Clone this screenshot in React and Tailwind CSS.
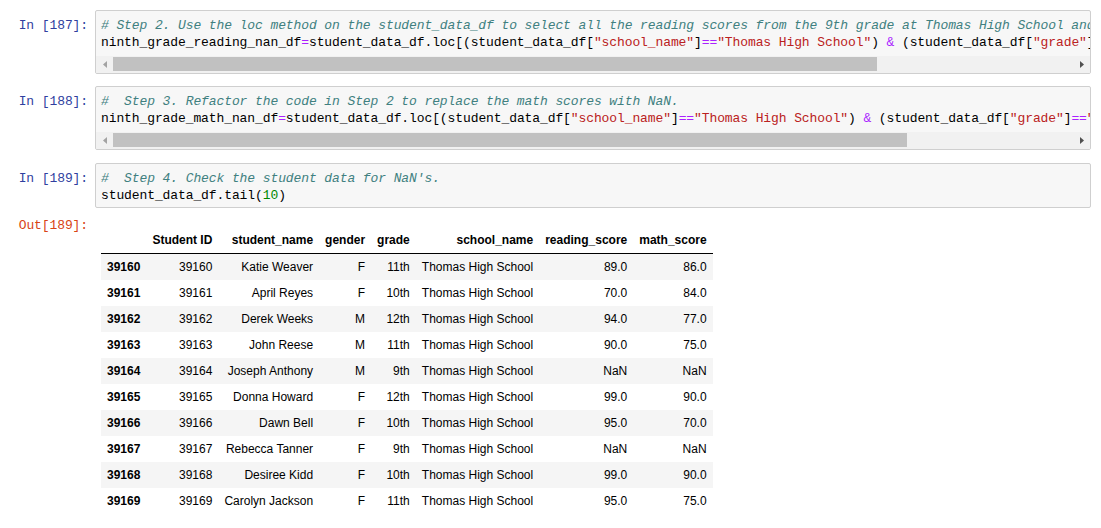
import React from "react";

const mono = { fontFamily: '"Liberation Mono", "DejaVu Sans Mono", monospace' };

const C = ({ children }) => <span className="italic text-[#408080]">{children}</span>;
const O = ({ children }) => <span className="text-[#AA22FF]">{children}</span>;
const S = ({ children }) => <span className="text-[#BA2121]">{children}</span>;
const N = ({ children }) => <span className="text-[#008800]">{children}</span>;

function Prompt({ children, out }) {
  return (
    <div
      style={mono}
      className={`w-[95px] shrink-0 pr-[7px] text-right text-[13px] tracking-[-0.1px] leading-[17px] ${
        out ? "text-[#D84315]" : "text-[#303F9F]"
      }`}
    >
      {children}
    </div>
  );
}

function Scrollbar({ thumbEnd }) {
  return (
    <div className="flex h-[17px] bg-[#f1f1f1]">
      <div className="flex w-[17px] shrink-0 items-center justify-center">
        <svg width="4" height="7" viewBox="0 0 4 7">
          <path d="M4 0 L0 3.5 L4 7 Z" fill="#a3a3a3" />
        </svg>
      </div>
      <div className="relative flex-1">
        <div
          className="absolute left-0 top-[1px] h-[14px] bg-[#c1c1c1]"
          style={{ width: thumbEnd }}
        />
      </div>
      <div className="flex w-[17px] shrink-0 items-center justify-center">
        <svg width="4" height="7" viewBox="0 0 4 7">
          <path d="M0 0 L4 3.5 L0 7 Z" fill="#505050" />
        </svg>
      </div>
    </div>
  );
}

function CodeCell({ n, lines, thumbEnd, className = "" }) {
  return (
    <div className={`flex ${className}`}>
      <Prompt>
        <div className="pt-[7px]">In [{n}]:</div>
      </Prompt>
      <div className="mr-[10px] min-w-0 flex-1 overflow-hidden rounded-[2px] border border-[#cfcfcf] bg-[#f7f7f7]">
        <div
          style={mono}
          className={`pl-[5px] pt-[6px] text-[13px] tracking-[-0.1px] leading-[17px] text-black ${
            thumbEnd ? "pb-[5px]" : "pb-[3px]"
          }`}
        >
          {lines.map((l, i) => (
            <div key={i} className="whitespace-pre">
              {l}
            </div>
          ))}
        </div>
        {thumbEnd ? <Scrollbar thumbEnd={thumbEnd} /> : null}
      </div>
    </div>
  );
}

const rows = [
  ["39160", "39160", "Katie Weaver", "F", "11th", "89.0", "86.0"],
  ["39161", "39161", "April Reyes", "F", "10th", "70.0", "84.0"],
  ["39162", "39162", "Derek Weeks", "M", "12th", "94.0", "77.0"],
  ["39163", "39163", "John Reese", "M", "11th", "90.0", "75.0"],
  ["39164", "39164", "Joseph Anthony", "M", "9th", "NaN", "NaN"],
  ["39165", "39165", "Donna Howard", "F", "12th", "99.0", "90.0"],
  ["39166", "39166", "Dawn Bell", "F", "10th", "95.0", "70.0"],
  ["39167", "39167", "Rebecca Tanner", "F", "9th", "NaN", "NaN"],
  ["39168", "39168", "Desiree Kidd", "F", "10th", "99.0", "90.0"],
  ["39169", "39169", "Carolyn Jackson", "F", "11th", "95.0", "75.0"],
];

const headers = ["", "Student ID", "student_name", "gender", "grade", "school_name", "reading_score", "math_score"];

export default function App() {
  return (
    <div className="min-h-[528px] w-[1101px] overflow-hidden bg-white pt-[10px]">
      <CodeCell
        n={187}
        thumbEnd={764}
        lines={[
          <C key="c"># Step 2. Use the loc method on the student_data_df to select all the reading scores from the 9th grade at Thomas High School and replace them with NaN.</C>,
          <span key="l">
            ninth_grade_reading_nan_df<O>=</O>student_data_df.loc[(student_data_df[<S>"school_name"</S>]<O>==</O>
            <S>"Thomas High School"</S>) <O>&amp;</O> (student_data_df[<S>"grade"</S>]<O>==</O>
            <S>"9th"</S>), <S>"reading_score"</S>]<O>=</O>np.nan
          </span>,
        ]}
      />
      <CodeCell
        n={188}
        thumbEnd={794}
        className="mt-[12px]"
        lines={[
          <C key="c">#  Step 3. Refactor the code in Step 2 to replace the math scores with NaN.</C>,
          <span key="l">
            ninth_grade_math_nan_df<O>=</O>student_data_df.loc[(student_data_df[<S>"school_name"</S>]<O>==</O>
            <S>"Thomas High School"</S>) <O>&amp;</O> (student_data_df[<S>"grade"</S>]<O>==</O>
            <S>"9th"</S>), <S>"math_score"</S>]<O>=</O>np.nan
          </span>,
        ]}
      />
      <CodeCell
        n={189}
        className="mt-[13px]"
        lines={[
          <C key="c">#  Step 4. Check the student data for NaN's.</C>,
          <span key="l">
            student_data_df.tail(<N>10</N>)
          </span>,
        ]}
      />
      <div className="flex">
        <Prompt out>
          <div className="pt-[9px]">Out[189]:</div>
        </Prompt>
        <div className="pl-[6px] pt-[19px]">
          <table
            className="border-collapse text-[12px] text-black"
            style={{ fontFamily: '"Liberation Sans", Arial, sans-serif' }}
          >
            <thead>
              <tr className="border-b border-black">
                {headers.map((h, i) => (
                  <th key={i} className="px-[6px] py-[6px] text-right align-bottom font-bold leading-[14px]">
                    {h}
                  </th>
                ))}
              </tr>
            </thead>
            <tbody>
              {rows.map((r, i) => (
                <tr key={r[0]} className={i % 2 === 0 ? "bg-[#f5f5f5]" : "bg-white"}>
                  <th className="px-[6px] py-[6px] text-left font-bold leading-[14px]">{r[0]}</th>
                  <td className="px-[6px] py-[6px] text-right leading-[14px]">{r[1]}</td>
                  <td className="px-[6px] py-[6px] text-right leading-[14px]">{r[2]}</td>
                  <td className="px-[6px] py-[6px] text-right leading-[14px]">{r[3]}</td>
                  <td className="px-[6px] py-[6px] text-right leading-[14px]">{r[4]}</td>
                  <td className="px-[6px] py-[6px] text-right leading-[14px]">Thomas High School</td>
                  <td className="px-[6px] py-[6px] text-right leading-[14px]">{r[5]}</td>
                  <td className="px-[6px] py-[6px] text-right leading-[14px]">{r[6]}</td>
                </tr>
              ))}
            </tbody>
          </table>
        </div>
      </div>
    </div>
  );
}
